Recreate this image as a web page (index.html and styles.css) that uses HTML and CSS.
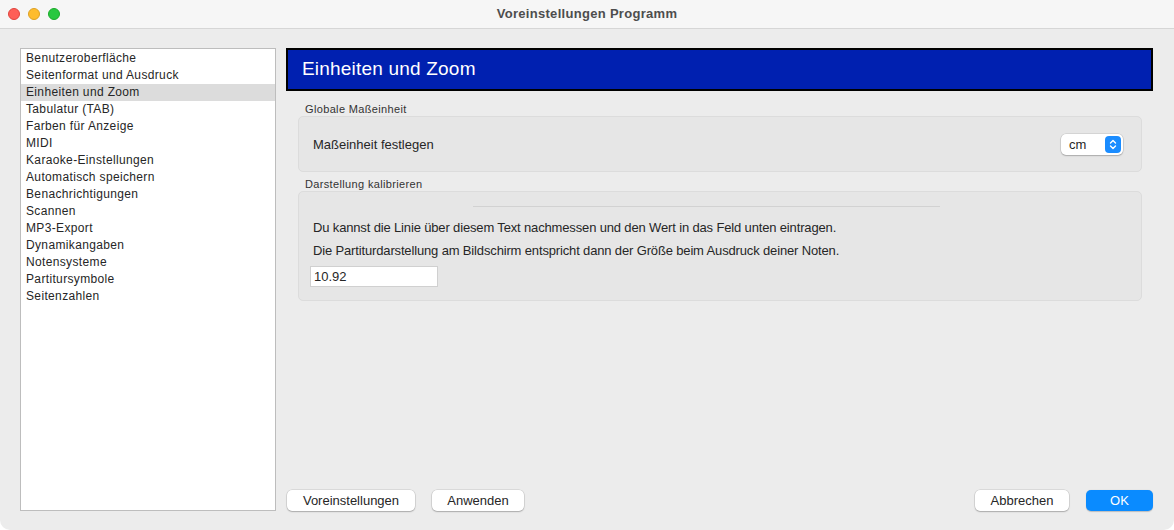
FILE: index.html
```html
<!DOCTYPE html>
<html lang="de">
<head>
<meta charset="utf-8">
<title>Voreinstellungen Programm</title>
<link rel="stylesheet" href="styles.css">
</head>
<body>
<div class="window">
  <div class="titlebar">
    <div class="lights">
      <span class="light red"></span>
      <span class="light yellow"></span>
      <span class="light green"></span>
    </div>
    <div class="title">Voreinstellungen Programm</div>
  </div>
  <div class="content">
    <ul class="list">
      <li>Benutzeroberfläche</li>
      <li>Seitenformat und Ausdruck</li>
      <li class="selected">Einheiten und Zoom</li>
      <li>Tabulatur (TAB)</li>
      <li>Farben für Anzeige</li>
      <li>MIDI</li>
      <li>Karaoke-Einstellungen</li>
      <li>Automatisch speichern</li>
      <li>Benachrichtigungen</li>
      <li>Scannen</li>
      <li>MP3-Export</li>
      <li>Dynamikangaben</li>
      <li>Notensysteme</li>
      <li>Partitursymbole</li>
      <li>Seitenzahlen</li>
    </ul>
    <div class="panel">
      <div class="header">Einheiten und Zoom</div>
      <div class="sections">
        <div class="group-label">Globale Maßeinheit</div>
        <div class="box box-unit">
          <span class="text">Maßeinheit festlegen</span>
          <div class="select">
            <span class="select-value">cm</span>
            <span class="stepper">
              <svg width="10" height="13" viewBox="0 0 10 13">
                <path d="M2.5 5 L5 2.5 L7.5 5 M2.5 8 L5 10.5 L7.5 8" fill="none" stroke="#fff" stroke-width="1.4" stroke-linecap="round" stroke-linejoin="round"/>
              </svg>
            </span>
          </div>
        </div>
        <div class="group-label">Darstellung kalibrieren</div>
        <div class="box box-cal">
          <div class="ruler-line"></div>
          <p class="text">Du kannst die Linie über diesem Text nachmessen und den Wert in das Feld unten eintragen.</p>
          <p class="text">Die Partiturdarstellung am Bildschirm entspricht dann der Größe beim Ausdruck deiner Noten.</p>
          <div class="field">10.92</div>
        </div>
      </div>
      <div class="buttons">
        <div class="btn-group">
          <button class="btn btn-defaults">Voreinstellungen</button>
          <button class="btn btn-apply">Anwenden</button>
        </div>
        <div class="btn-group">
          <button class="btn btn-cancel">Abbrechen</button>
          <button class="btn btn-primary">OK</button>
        </div>
      </div>
    </div>
  </div>
</div>
</body>
</html>
```
FILE: styles.css
```css
* { box-sizing: border-box; }
html, body {
  margin: 0;
  padding: 0;
  background: #ffffff;
  font-family: "Liberation Sans", Arial, sans-serif;
  color: #262626;
}
.window {
  width: 1174px;
  height: 530px;
  background: #ececec;
  border-radius: 0 0 10px 10px;
  display: flex;
  flex-direction: column;
  overflow: hidden;
}
.titlebar {
  height: 29px;
  flex: none;
  background: #f6f6f6;
  border-bottom: 1px solid #d6d6d6;
  position: relative;
  display: flex;
  align-items: center;
  justify-content: center;
}
.lights {
  position: absolute;
  left: 8px;
  top: 8px;
  display: flex;
  gap: 8px;
}
.light {
  width: 12px;
  height: 12px;
  border-radius: 50%;
  display: block;
}
.red { background: #fe5f57; border: 0.5px solid #e0443e; }
.yellow { background: #febc2e; border: 0.5px solid #dea123; }
.green { background: #28c840; border: 0.5px solid #1aab29; }
.title {
  font-size: 13px;
  font-weight: bold;
  color: #4d4d4d;
  letter-spacing: 0.3px;
  margin-top: -1px;
}
.content {
  flex: 1;
  display: flex;
  gap: 10px;
  padding: 19px 21px 19px 20px;
}
.list {
  list-style: none;
  margin: 0;
  padding: 1px 0 0 0;
  width: 256px;
  flex: none;
  background: #fff;
  border: 1px solid #bdbdbd;
}
.list li {
  height: 17px;
  line-height: 17px;
  font-size: 12px;
  letter-spacing: 0.35px;
  padding-left: 5px;
  color: #262626;
}
.list li.selected { background: #dcdcdc; }
.panel {
  flex: 1;
  display: flex;
  flex-direction: column;
}
.header {
  height: 43px;
  background: #0020b0;
  border: 2px solid #000;
  color: #fff;
  font-size: 19px;
  letter-spacing: 0.2px;
  display: flex;
  align-items: center;
  padding-left: 14px;
  padding-bottom: 1px;
}
.sections {
  flex: 1;
  padding: 11px 11px 0 12px;
}
.group-label {
  font-size: 11px;
  letter-spacing: 0.35px;
  color: #333;
  padding-left: 7px;
  height: 14px;
  line-height: 14px;
}
.box {
  background: #e6e6e6;
  border: 1px solid #dcdcdc;
  border-radius: 5px;
}
.box-unit {
  height: 56px;
  margin-bottom: 5px;
  display: flex;
  align-items: center;
  justify-content: space-between;
  padding: 0 18px 0 14px;
}
.text {
  font-size: 13px;
  color: #262626;
  margin: 0;
}
.box-unit .text { margin-top: 1px; }
.select {
  width: 62px;
  height: 21px;
  background: #fff;
  border-radius: 5px;
  box-shadow: 0 0 0 0.5px rgba(0,0,0,0.15), 0 1px 1.5px rgba(0,0,0,0.2);
  display: flex;
  align-items: center;
  justify-content: space-between;
  padding: 0 2px 0 8px;
}
.select-value { font-size: 13px; color: #262626; }
.stepper {
  width: 16px;
  height: 17px;
  background: #1a8cff;
  border-radius: 4px;
  display: flex;
  align-items: center;
  justify-content: center;
}
.box-cal {
  height: 110px;
  padding: 14px 14px 0 14px;
  display: flex;
  flex-direction: column;
}
.ruler-line {
  margin-left: 160px;
  width: 467px;
  height: 1px;
  background: #d2d2d2;
  margin-bottom: 13px;
}
.box-cal .text {
  line-height: 16px;
  margin-bottom: 7px;
  letter-spacing: -0.15px;
}
.field {
  width: 128px;
  height: 21px;
  margin-left: -3px;
  background: #fff;
  border: 1px solid #d0d0d0;
  font-size: 13px;
  line-height: 19px;
  padding-left: 3px;
  color: #262626;
}
.buttons {
  display: flex;
  justify-content: space-between;
  align-items: flex-end;
}
.btn-group {
  display: flex;
  gap: 16px;
}
.btn {
  font-family: "Liberation Sans", Arial, sans-serif;
  font-size: 13px;
  color: #262626;
  height: 21px;
  background: #fff;
  border: none;
  border-radius: 5px;
  box-shadow: 0 0 0 0.5px rgba(0,0,0,0.15), 0 1px 1.5px rgba(0,0,0,0.22);
  padding: 0;
  margin: 0 0 0 1px;
}
.btn-defaults { width: 128px; }
.btn-apply { width: 92px; }
.btn-cancel { width: 94px; }
.btn-primary {
  width: 67px;
  background: #0a8bff;
  color: #fff;
  box-shadow: 0 0.5px 1px rgba(0,0,0,0.2);
}
```
